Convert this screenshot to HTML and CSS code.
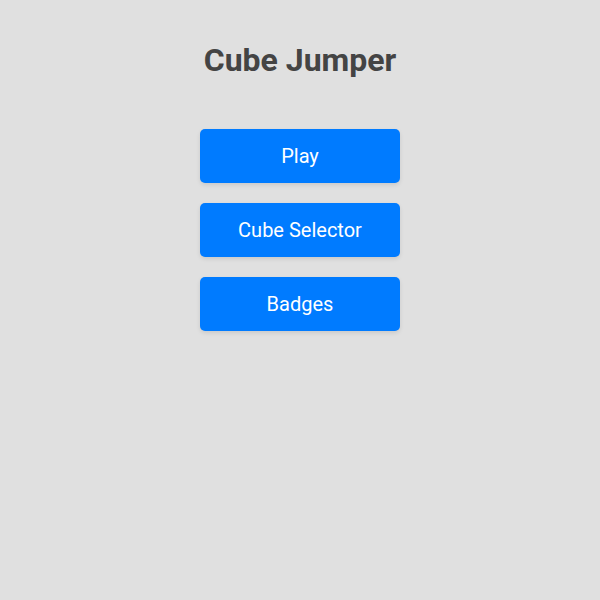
FILE: index.html
```html
<!DOCTYPE html>
<html lang="en">
  <head>
    <meta charset="UTF-8" />
    <meta name="viewport" content="width=device-width, initial-scale=1.0" />
    <title>Cube Jumper</title>
    <link rel="stylesheet" href="styles.css">
  </head>
  <body>
    <div class="menu">
      <h1>Cube Jumper</h1>
      <div class="buttons">
        <button class="menu-button">Play</button>
        <button class="menu-button">Cube Selector</button>
        <button class="menu-button">Badges</button>
      </div>
    </div>
  </body>
</html>
```

FILE: styles.css
```css
body {
  font-family: Roboto, "Liberation Sans", Arial, sans-serif;
  background-color: #e0e0e0;
  margin: 0;
  height: 100vh;
}

.menu {
  display: flex;
  flex-direction: column;
  align-items: center;
  padding-top: 40px;
}

h1 {
  margin: 0 0 49px;
  font-size: 32px;
  line-height: 40px;
  font-weight: 700;
  color: #444444;
}

.buttons {
  display: flex;
  flex-direction: column;
  gap: 20px;
}

.menu-button {
  width: 200px;
  height: 54px;
  border: none;
  border-radius: 5px;
  background-color: #007bff;
  color: white;
  font-family: inherit;
  font-size: 20px;
  cursor: pointer;
  box-shadow: 0 2px 4px rgba(0, 0, 0, 0.1);
}

.menu-button:hover {
  background-color: #0062cc;
}
```
